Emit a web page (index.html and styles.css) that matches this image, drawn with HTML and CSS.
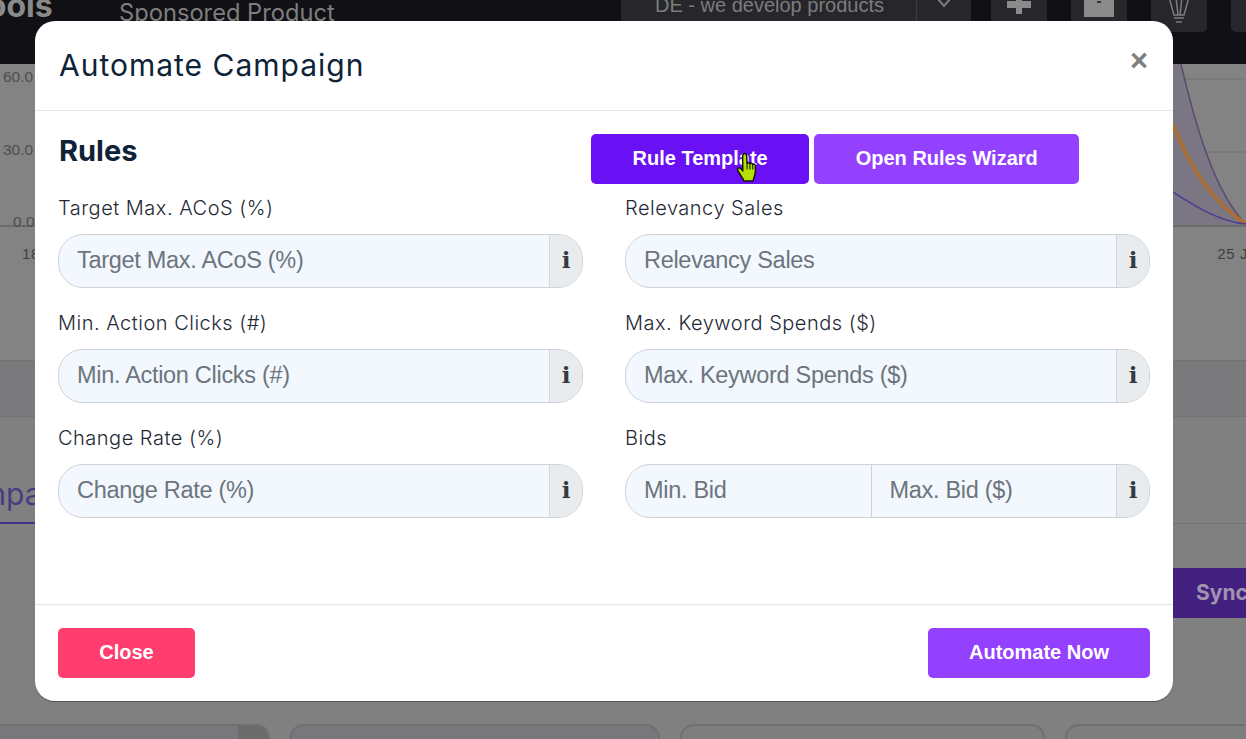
FILE: index.html
```html
<!DOCTYPE html>
<html lang="en">
<head>
<meta charset="utf-8">
<title>Automate Campaign</title>
<link rel="stylesheet" href="styles.css">
</head>
<body>
<div class="page">
  <header class="topbar">
    <div class="logo">Tools</div>
    <div class="crumb">Sponsored Product</div>
    <div class="select"><span class="select-text">DE - we develop products</span><span class="select-caret"><svg width="18" height="12" viewBox="0 0 18 12"><path d="M2 1l7 8 7-8" fill="none" stroke="#7c7c7c" stroke-width="2"/></svg></span></div>
    <div class="tool"><svg width="24" height="20" viewBox="0 0 24 20"><path d="M9 0h6v4h9v7h-9v6H9v-6H0V4h9z" fill="#8b8b8b"/></svg></div>
    <div class="tool"><svg width="30" height="20" viewBox="0 0 30 20"><path d="M0 0h30v20H0z" fill="#8b8b8b"/><path d="M13 4h4v2h-4z" fill="#33333a"/></svg></div>
    <div class="tool"><svg width="22" height="28" viewBox="0 0 22 28"><path d="M1 0l5 18h10l5-18M8 0l2 18M14 0l-2 18M6 21h10M8 25h6" fill="none" stroke="#7d7d7d" stroke-width="1.5"/></svg></div>
    <div class="tool"></div>
  </header>

  <section class="chart">
    <svg class="chart-svg" width="1246" height="164" viewBox="0 0 1246 164">
      <path d="M36 15H1246M36 88H1246" stroke="#787878" stroke-width="1.5" fill="none"/>
      <path d="M1173 0H1181C1195 60 1215 130 1246 161H1173Z" fill="#7b7684"/>
      <path d="M1181 0C1195 60 1215 130 1246 160" stroke="#5c4a70" stroke-width="1.5" fill="none"/>
      <path d="M1173 60C1190 105 1215 140 1246 160" stroke="#a86f3a" stroke-width="4" fill="none"/>
      <path d="M1173 128C1195 142 1220 158 1246 160" stroke="#4e3a96" stroke-width="1.5" fill="none"/>
      <path d="M0 162H1246" stroke="#666" stroke-width="1.5"/>
      <text class="tick" x="3" y="18">60.0</text>
      <text class="tick" x="3" y="91">30.0</text>
      <text class="tick" x="13" y="163">0.0</text>
    </svg>
    <div class="axis"><span>18 Jan</span><span>25 Jan</span></div>
  </section>

  <div class="band"></div>

  <nav class="tabs"><span class="tab">Campaigns</span></nav>

  <div class="actions"><span class="sync">Sync Now</span></div>

  <div class="cards">
    <div class="card card-select"></div>
    <div class="card card-dim"></div>
    <div class="card card-short"></div>
    <div class="card"></div>
  </div>
</div>

<div class="modal" role="dialog" aria-label="Automate Campaign">
  <div class="modal-head">
    <h1 class="modal-title">Automate Campaign</h1>
    <span class="modal-x">×</span>
  </div>
  <div class="modal-body">
    <div class="rules-head">
      <h2 class="rules-title">Rules</h2>
      <div class="rules-buttons">
        <button class="btn btn-deep">Rule Template</button>
        <button class="btn btn-violet">Open Rules Wizard</button>
      </div>
    </div>
    <div class="form-grid">
      <div class="field">
        <label class="field-label">Target Max. ACoS (%)</label>
        <div class="group"><input class="cell" placeholder="Target Max. ACoS (%)"><span class="addon">i</span></div>
      </div>
      <div class="field">
        <label class="field-label">Relevancy Sales</label>
        <div class="group"><input class="cell" placeholder="Relevancy Sales"><span class="addon">i</span></div>
      </div>
      <div class="field">
        <label class="field-label">Min. Action Clicks (#)</label>
        <div class="group"><input class="cell" placeholder="Min. Action Clicks (#)"><span class="addon">i</span></div>
      </div>
      <div class="field">
        <label class="field-label">Max. Keyword Spends ($)</label>
        <div class="group"><input class="cell" placeholder="Max. Keyword Spends ($)"><span class="addon">i</span></div>
      </div>
      <div class="field">
        <label class="field-label">Change Rate (%)</label>
        <div class="group"><input class="cell" placeholder="Change Rate (%)"><span class="addon">i</span></div>
      </div>
      <div class="field">
        <label class="field-label">Bids</label>
        <div class="group"><input class="cell cell-split" placeholder="Min. Bid"><input class="cell" placeholder="Max. Bid ($)"><span class="addon">i</span></div>
      </div>
    </div>
  </div>
  <div class="modal-foot">
    <button class="btn btn-rose">Close</button>
    <button class="btn btn-violet btn-wide">Automate Now</button>
  </div>
  <svg class="pointer" width="25" height="31" viewBox="0 0 24 30">
    <path d="M7 2.2c1-1.3 3-.8 3.2 1L10.600 11c.5-1.200 2.500-1 2.800.4.600-1 2.400-.8 2.700.7.700-.8 2.400-.4 2.500 1 .3 3 .3 6.500-.6 9.500-.6 2.200-1.200 3.500-1.500 5.400H7.500C6.800 25.500 4.500 23 2.500 19.500 1.300 17.500 1 16 2.300 15.300c1.200-.6 2.600.6 4.200 3L6.300 4.500C6.300 3.500 6.500 2.800 7 2.200z" fill="#b6e100" stroke="#111" stroke-width="1.400" stroke-linejoin="round"/>
    <path d="M10.600 11v6M13.400 11.500V17M16.100 12.500V17" stroke="#111" stroke-width="1" fill="none"/>
  </svg>
</div>
</body>
</html>
```
FILE: styles.css
```css
* { box-sizing: border-box; }
html, body { margin: 0; height: 739px; overflow: hidden; }
body { font-family: "Liberation Sans", Arial, sans-serif; background: #808080; position: relative; }

.page { width: 1246px; height: 739px; overflow: hidden; display: flex; flex-direction: column; background: #808080; }

.topbar { height: 64px; flex: none; background: #101015; display: flex; align-items: flex-start; color: #7e7e7e; }
.logo { width: 109px; margin-top: -12px; margin-left: -32px; font: 700 32px/36px "Inter", sans-serif; color: #8a8a8a; flex: none; }
.crumb { width: 502px; margin-left: 42px; margin-top: -1px; font: 400 23.700px/28px "Inter", sans-serif; color: #7e7e7e; flex: none; }
.select { width: 350px; height: 22px; margin-right: 20px; flex: none; display: flex; background: #26262b; color: #7c7c7c; font-size: 20px; line-height: 10px; }
.select-text { width: 296px; padding-left: 34px; border-right: 1px solid #3c3c40; white-space: nowrap; }
.select-caret { flex: 1; display: flex; justify-content: center; margin-top: -3px; }
.tool { width: 56px; height: 32px; margin-right: 24px; flex: none; background: #26262b; border-radius: 0 0 5px 5px; display: flex; justify-content: center; }
.tool svg { margin-top: -3px; }

.chart { height: 296px; flex: none; background: #838383; }
.chart-svg { display: block; }
.tick { font: 15.500px "Liberation Sans", sans-serif; fill: #4e4e4e; }
.axis { display: flex; justify-content: space-between; padding: 17px 0 0 22px; font-size: 15px; color: #3f3f3f; white-space: nowrap; margin-right: -20px; letter-spacing: .6px; }

.band { height: 57px; flex: none; background: #7a7a7d; border-top: 1.500px solid #727272; border-bottom: 1.500px solid #737373; }

.tabs { height: 107px; flex: none; border-bottom: 1px solid #727272; display: flex; align-items: flex-end; }
.tab { margin-left: -59px; padding: 0 120px 10px 0; font: 400 30px/36px "Inter", sans-serif; color: #483c80; border-bottom: 2px solid #45308c; margin-bottom: -1px; }

.actions { height: 201px; flex: none; padding-top: 44px; display: flex; justify-content: flex-end; }
.sync { height: 50px; width: 140px; margin-right: -66px; padding-left: 24px; background: #43207f; color: #a193b0; font: 700 21px/50px "Inter", sans-serif; white-space: nowrap; }

.cards { margin-top: -1px; flex: none; display: flex; gap: 20px; margin-left: -10px; }
.card { width: 370px; height: 40px; border: 2px solid #707070; border-bottom: 0; border-radius: 14px 14px 0 0; background: #7e7e7e; flex: none; }
.card-select { width: 280px; background: linear-gradient(90deg, #78787c 89%, #6c6c6c 89%); }
.card-dim { background: #78787c; }
.card-short { width: 365px; }

.modal { position: absolute; left: 35px; top: 21px; width: 1138px; height: 680px; background: #fff; border-radius: 20px; display: flex; flex-direction: column; box-shadow: 0 1px 0 #555; }

.modal-head { height: 90px; flex: none; padding: 0 23px 0 24px; display: flex; justify-content: space-between; align-items: flex-start; border-bottom: 1px solid #e4e6e9; }
.modal-title { margin: 26px 0 0; font: 400 30px/36px "Inter", sans-serif; letter-spacing: 1px; color: #0e2238; }
.modal-x { margin: 20px 2px 0 0; font: 700 31px/40px "Liberation Sans", sans-serif; color: #808080; }

.modal-body { flex: 1; padding: 23px 23px 0; }
.rules-head { display: flex; height: 50px; }
.rules-title { width: 533px; flex: none; margin: 0; font: 700 29px/34px "Inter", sans-serif; color: #0e2238; padding-left: 1px; }
.rules-buttons { display: flex; gap: 5px; }

.btn { height: 50px; border: 0; border-radius: 5px; color: #fff; font: 700 20px/46px "Liberation Sans", sans-serif; padding: 0 41.500px 2px; cursor: pointer; }
.btn-deep { background: #6a10f5; }
.btn-violet { background: #9340ff; }
.btn-rose { background: #ff3d6e; width: 137px; padding: 0 0 2px; }
.btn-wide { width: 222px; padding: 0 0 2px; }

.form-grid { display: grid; grid-template-columns: 525px 525px; column-gap: 42px; row-gap: 21px; margin-top: 10px; }
.field-label { display: block; height: 30px; margin-bottom: 10px; font: 300 20px/28px "Inter", sans-serif; letter-spacing: .5px; color: #1f2a35; white-space: nowrap; }
.group { height: 54px; display: flex; border: 1px solid #cfd2d6; border-radius: 25px; overflow: hidden; background: #f3f8fe; }
.cell { flex: 1; min-width: 0; width: 100%; height: 100%; padding: 0 0 2px 18px; border: 0; outline: 0; background: transparent; font: 400 23.500px "Liberation Sans", sans-serif; letter-spacing: -.3px; color: #6c757d; }
.cell::placeholder { color: #6c757d; opacity: 1; }
.cell-split { border-right: 1px solid #cfd2d6; }
.addon { width: 33px; flex: none; background: #e9ecef; border-left: 1px solid #d4d6d9; text-align: center; font: 700 23px/50px "DejaVu Serif", serif; color: #343a40; }

.modal-foot { height: 97px; flex: none; padding: 23px 23px 0; display: flex; justify-content: space-between; border-top: 1px solid #e4e6e9; }

.pointer { position: absolute; left: 701px; top: 131px; }
```
